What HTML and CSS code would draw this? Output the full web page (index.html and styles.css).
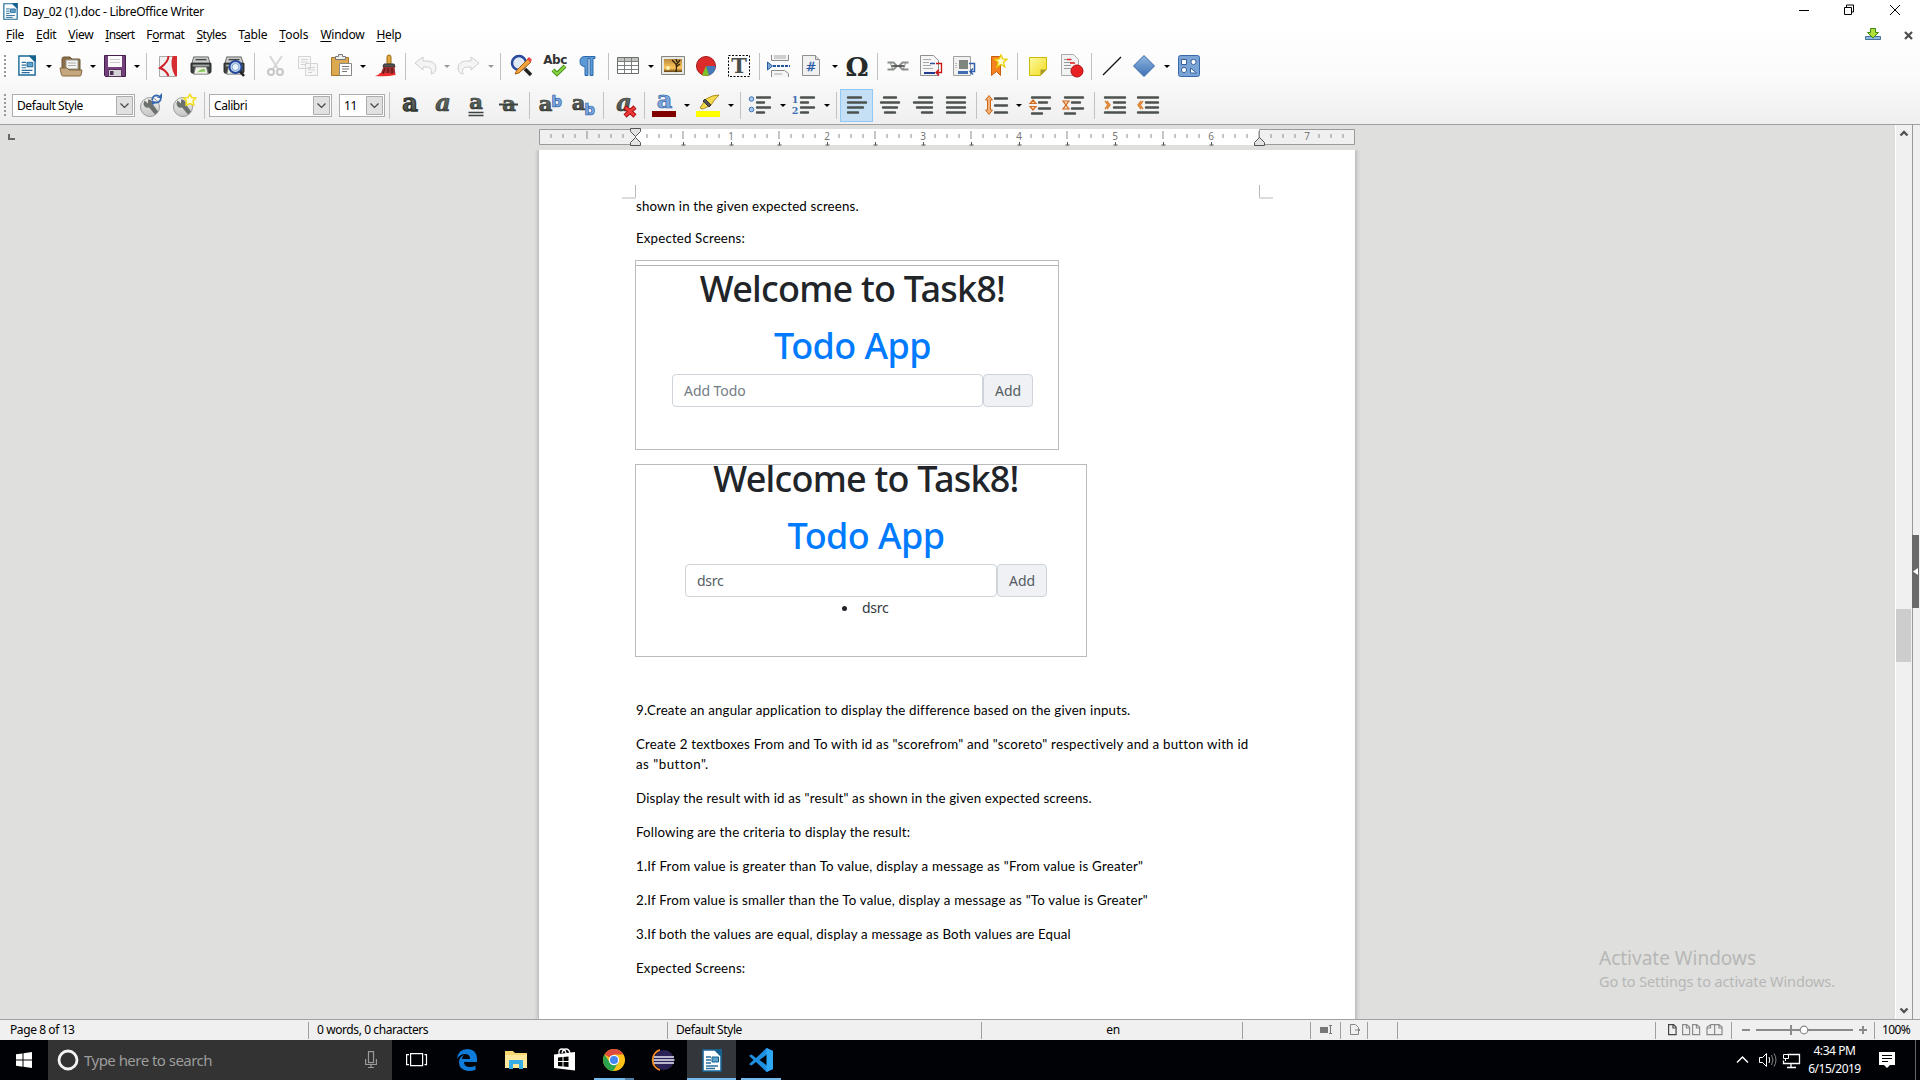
FILE: index.html
```html
<!DOCTYPE html>
<html lang="en">
<head>
<meta charset="utf-8">
<title>Day_02 (1).doc - LibreOffice Writer</title>
<link rel="stylesheet" href="styles.css">
</head>
<body>
<svg class="defs" width="0" height="0">
  <defs>
    <linearGradient id="ink" x1="0" y1="0" x2="0" y2="1"><stop offset="0" stop-color="#7b827b"/><stop offset="1" stop-color="#3c423f"/></linearGradient>
    <linearGradient id="blue" x1="0" y1="0" x2="0" y2="1"><stop offset="0" stop-color="#8fb6e0"/><stop offset="1" stop-color="#3d72b4"/></linearGradient>
    <linearGradient id="yel" x1="0" y1="0" x2="1" y2="1"><stop offset="0" stop-color="#fff9a0"/><stop offset="1" stop-color="#f0dc20"/></linearGradient>
    <linearGradient id="pic" x1="0" y1="0" x2="0" y2="1"><stop offset="0" stop-color="#b98a3c"/><stop offset=".7" stop-color="#ffc65a"/><stop offset="1" stop-color="#5d3c10"/></linearGradient>
    <linearGradient id="disc" x1="0" y1="0" x2="0" y2="1"><stop offset="0" stop-color="#f2f2f0"/><stop offset="1" stop-color="#c4c6c3"/></linearGradient>
    <symbol id="writer" viewBox="0 0 20 23"><path d="M1 1h12l6 6v15H1z" fill="#fff" stroke="#1b6a99" stroke-width="1.6"/><path d="M12 0h8v8z" fill="#17618f"/><path d="M4 8h5M4 11h5M4 14h5M4 17h12M4 19.500h9" stroke="#2a6f9c" stroke-width="1.300"/><path d="M10 8h6.500v5H10z" fill="#5ea3cd" stroke="#17618f"/></symbol>
    <symbol id="printer" viewBox="0 0 24 22"><path d="M4 1h16l2 7H2z" fill="#c9ccca" stroke="#5c605d"/><path d="M6 4h12" stroke="#444" stroke-width="1.500"/><path d="M1 8h22v9q0 2-2 2H3q-2 0-2-2z" fill="#3e4340" stroke="#222"/><path d="M3 9.500h18v2H3z" fill="#a2a8a4"/><path d="M6 12h12l2 8H4z" fill="#eef3e8" stroke="#777"/><path d="M8 18q3-4 8-4l1 3z" fill="#8ac75d"/></symbol>
    <symbol id="wrench" viewBox="0 0 33 33"><circle cx="16" cy="18" r="9.500" fill="url(#disc)" stroke="#9a9c99"/><path d="M10.500 11.500l3.500 3v-4q5 0 5 5l5 7-3 3-6-7q-5 1-5.500-4z" fill="#6d716d"/></symbol>
  </defs>
</svg>
<div class="screen">

  <header class="titlebar">
    <svg class="app-icon" width="15" height="17"><use href="#writer"/></svg>
    <span class="title">Day_02 (1).doc - LibreOffice Writer</span>
    <svg class="window-buttons" width="120" height="24" fill="none" stroke="#000"><path d="M4 10.500h10"/><path d="M49.500 7.500h7v7h-7zM51.500 7v-2h7v7h-2"/><path d="M95 5l10 10M105 5l-10 10"/></svg>
  </header>

  <div class="chrome">
    <nav class="menubar">
      <span><u>F</u>ile</span>
      <span><u>E</u>dit</span>
      <span><u>V</u>iew</span>
      <span><u>I</u>nsert</span>
      <span>F<u>o</u>rmat</span>
      <span><u>S</u>tyles</span>
      <span>T<u>a</u>ble</span>
      <span><u>T</u>ools</span>
      <span><u>W</u>indow</span>
      <span><u>H</u>elp</span>
      <svg class="menu-end" width="55" height="22"><path d="M.5 12.500h15v3H.5z" fill="#8fb9dd" stroke="#47709a"/><path d="M5.500 4.500h5v4h3L8 14 2.500 8.500h3z" fill="#b4de3a" stroke="#3c8a10"/><path d="M40 8l7 7M47 8l-7 7" stroke="#4d4d4d" stroke-width="2.200"/></svg>
    </nav>

    <div class="toolbar">
      <i class="grip"></i>
      <svg class="ico"><use href="#writer" x="8" y="5" width="18" height="21"/></svg><i class="dd"></i>
      <svg class="ico"><path d="M8 9q0-2 2-2h6l2 2h7q1 0 1 1v12H8z" fill="#8b6f47" stroke="#6d5534"/><path d="M12 10h12v9H12z" fill="#f4f4f2" stroke="#999"/><path d="M14 13h8M14 15.500h8" stroke="#aaa"/><path d="M6 18h7l2 2h13l-1 5q0 1-1 1H9q-1 0-1.500-1z" fill="#c5a880" stroke="#86693f"/></svg><i class="dd"></i>
      <svg class="ico"><path d="M6.500 5.500h21v21h-20l-1-1z" fill="#74407c" stroke="#42204a"/><path d="M10 6h14v11H10z" fill="#fbfbfb"/><path d="M12 9.500h10M12 12.500h10" stroke="#ccc"/><path d="M10.500 19.500h13v7h-13z" fill="#d4d4d4" stroke="#5a3361"/><path d="M12 21h3.500v4H12z" fill="#51305a"/></svg><i class="dd"></i>
      <i class="sep wide"></i>
      <svg class="ico"><path d="M8.500 6.500h17v20h-17z" fill="#f1f1f1" stroke="#aaa"/><path d="M21.500 6h4.500v20h-2q-5.500-10-2.500-20z" fill="#d62b30"/><path d="M17.500 6q0 6-8.500 12 6 2 8.500 8" fill="none" stroke="#cf2026" stroke-width="2"/></svg>
      <svg class="ico"><use href="#printer" x="6" y="6" width="22" height="20"/></svg>
      <svg class="ico"><use href="#printer" x="6" y="6" width="22" height="20"/><circle cx="18.500" cy="17" r="6" fill="#c7dcf2" stroke="#24479c" stroke-width="2"/><path d="M23 21.500l4 4.500" stroke="#222" stroke-width="2.600"/><circle cx="18.500" cy="17" r="3.500" fill="#eaf3fb" stroke="#7da6d4"/></svg>
      <i class="sep"></i>
      <svg class="ico"><path d="M12 6l8 13M24 6l-9 13" stroke="#d6d6d6" stroke-width="2"/><circle cx="13" cy="22" r="3" fill="none" stroke="#c6c6c6" stroke-width="2"/><circle cx="22" cy="22" r="3" fill="none" stroke="#c6c6c6" stroke-width="2"/></svg>
      <svg class="ico"><path d="M7.500 6.500h12v12h-12zM14.500 13.500h12v12h-12z" fill="#f7f7f7" stroke="#d4d4d4"/><path d="M10 9.500h7M10 12h7M10 14.500h4M17 17.500h7M17 20h7M17 22.500h4" stroke="#d4d4d4"/></svg>
      <svg class="ico"><path d="M7.500 7.500h17v18h-17z" fill="#dca850" stroke="#a2742c"/><path d="M11.500 9.500v-3h3v-2h4v2h3v3z" fill="#eee" stroke="#777"/><path d="M15.500 13.500h12v12h-12z" fill="#fff" stroke="#888"/><path d="M18 16.500h7M18 19h7M18 21.500h5" stroke="#777"/></svg><i class="dd"></i>
      <svg class="ico"><path d="M19 7q0-2 2-2t2 2v7h-4z" fill="#e6a93c" stroke="#9b6a1a"/><path d="M16 14h10l1 3H15z" fill="#555" stroke="#333"/><path d="M15.500 17h11l1 8H12z" fill="#9c2f30"/><path d="M12 23h15v2q-8 2-20 1 4-1 5-3z" fill="#ee2b2b"/><path d="M17 18l-2 6M20 18v5M24 18v6" stroke="#551010"/></svg>
      <i class="sep"></i>
      <svg class="ico"><path d="M6 13l8-6v4q13-1 13 7 0 5-5 6 3-8-8-7v3z" fill="#f4f4f4" stroke="#cfcfcf"/></svg><i class="dd off short"></i>
      <svg class="ico"><path d="M27 13l-8-6v4q-13-1-13 7 0 5 5 6-3-8 8-7v3z" fill="#f4f4f4" stroke="#cfcfcf"/></svg><i class="dd off"></i>
      <i class="sep wide"></i>
      <svg class="ico"><circle cx="14" cy="13" r="7" fill="#dfe9f4" stroke="#28489c" stroke-width="2.500"/><path d="M20 19l6 6" stroke="#222" stroke-width="3.500"/><path d="M10 24l2-4L23 9l3 3-12 11z" fill="#f2a33c" stroke="#a35f16"/><path d="M22 9l2-2 3 3-2 2z" fill="#e44"/></svg>
      <svg class="ico"><text x="17" y="14" class="abc">Abc</text><path d="M15 20l4 4 8-8" fill="none" stroke="#3f8e16" stroke-width="4"/><path d="M15 20l4 4 8-8" fill="none" stroke="#8bd33f" stroke-width="2"/></svg>
      <svg class="ico"><path d="M24 6.500v2h-2v17h-3v-17h-2v17h-3v-9q-5 0-5-5t5-5z" fill="#5b9ad6" stroke="#2c69a9"/></svg>
      <i class="sep"></i>
      <svg class="ico"><path d="M5.500 7.500h21v16h-21z" fill="#fff" stroke="#6b6f6b"/><path d="M6 8h20v3H6z" fill="#bfc2bf"/><path d="M6 11.500h20M6 15.500h20M6 19.500h20M12.500 8v15M19.500 8v15" stroke="#7c807c"/></svg><i class="dd"></i>
      <svg class="ico"><path d="M5.500 6.500h23v18h-23z" fill="#e8e8e4" stroke="#85877f"/><path d="M8 9h18v13H8z" fill="url(#pic)"/><path d="M20 22q1-5 0-8l-4-4M20 15l4-5M21 12l-1-3M20 17l4-3" fill="none" stroke="#322008" stroke-width="1.300"/><circle cx="12" cy="18" r="2" fill="#fff3b0"/></svg>
      <svg class="ico"><circle cx="17" cy="16" r="9.500" fill="#dd2a2a" stroke="#a31515"/><path d="M17 16h9.500q0 8-7 9.500z" fill="#4578b8"/><path d="M17 16l3 9.200q-3 1-7 0z" fill="#7cc02c"/></svg>
      <svg class="ico"><path d="M6.500 5.500h21v21h-21z" fill="none" stroke="#000" stroke-dasharray="2 1.500"/><text x="17" y="23" class="tee">T</text></svg>
      <i class="sep"></i>
      <svg class="ico"><path d="M8.500 5v5.500h17V5M8.500 27v-6.500h13l4 3V27" fill="#f5f5f5" stroke="#8b8b8b"/><path d="M11 6h12M11 8h12M11 24h8" stroke="#aaa"/><path d="M4.500 12l5 4-5 4z" fill="#7ba7d6" stroke="#2a5da0"/><path d="M10 16h17" stroke="#2456a4" stroke-width="2" stroke-dasharray="3 1"/></svg>
      <svg class="ico"><path d="M6.500 5.500h13l4 4v16h-17z" fill="#f1f1f1" stroke="#909090"/><path d="M19.500 5.500v4h4" fill="#ddd" stroke="#909090"/><text x="15" y="21" class="hash">#</text></svg><i class="dd"></i>
      <svg class="ico"><text x="17" y="25.500" class="omega">Ω</text></svg>
      <i class="sep"></i>
      <svg class="ico"><g fill="none" stroke="#8a8f8a" stroke-width="1.800"><path d="M6.500 12.500h6l3.500 3.500-3.500 3.500h-6M27.500 12.500h-6L18 16l3.500 3.500h6"/><path d="M10 16h14" stroke="#555"/><path d="M9 12l3 8M25 12l-3 8" stroke-width="1"/></g></svg>
      <svg class="ico"><path d="M6.500 5.500h13l5 5v15h-18z" fill="#f6f6f6" stroke="#909090"/><path d="M9 9.500h8M9 12.500h6M9 15.500h8M9 18.500h10" stroke="#aaa"/><path d="M16 13.500h5" stroke="#2a56a0" stroke-width="1.500"/><path d="M10 23h11" stroke="#1d3f8e" stroke-width="2"/><path d="M22 13.500h5.500v9H23m2-3l-3 3 3 3" fill="none" stroke="#c11" stroke-width="1.300"/></svg>
      <svg class="ico"><path d="M6.500 6.500h17v19h-17z" fill="#f1f1f1" stroke="#a0a0a0"/><path d="M12 10h9v9h-9z" fill="#7d857d"/><path d="M11 22.500h10" stroke="#3f6fb2" stroke-width="3"/><path d="M22 13.500h5.500v8H24m2-3l-3 3 3 3" fill="none" stroke="#2f5fa8" stroke-width="1.500"/><path d="M9 13v6" stroke="#888" stroke-dasharray="1 1"/></svg>
      <svg class="ico"><path d="M11.500 6.500h9v19l-4-4-5 4z" fill="#f58220" stroke="#c85f0a"/><path d="M21 5l1.700 4 4.300.3-3.400 3 1.200 4.500L21 14.500l-4 2.300 1.200-4.500-3.200-3 4.300-.3z" fill="#fffbd0" stroke="#e8cf00" stroke-width="1.300"/></svg>
      <i class="sep"></i>
      <svg class="ico"><path d="M8.500 7.500h17v12l-6 6h-11z" fill="url(#yel)" stroke="#cdb80c"/><path d="M19.500 25.500v-6h6z" fill="#a99a2a"/></svg>
      <svg class="ico"><path d="M7.500 4.500h12l5 5v16h-17z" fill="#f3f3f3" stroke="#aaa"/><path d="M10 9.500h8M10 12.500h9M10 15.500h7M10 18.500h7" stroke="#999"/><path d="M13 9.500h4M16 13h5" stroke="#e22" stroke-width="1.500"/><circle cx="23" cy="21" r="6" fill="#e82222" stroke="#b00c0c"/></svg>
      <i class="sep"></i>
      <svg class="ico"><path d="M8 25L26 7" stroke="#111" stroke-width="1.300"/></svg>
      <svg class="ico"><path d="M16 5.500L26.500 16 16 26.500 5.500 16z" fill="url(#blue)" stroke="#3566a6"/></svg><i class="dd"></i>
      <svg class="ico"><rect x="6.500" y="5.500" width="21" height="21" rx="2" fill="#7aa3d6" stroke="#3a69ab"/><g fill="#fff" stroke="#35609c"><path d="M9.500 9.500h5v5h-5zM18.500 18v5h6z"/><circle cx="21.500" cy="12" r="2.600"/><circle cx="12" cy="20" r="2.600"/></g></svg>
    </div>

    <div class="toolbar second">
      <i class="grip"></i>
      <div class="combo wide"><span>Default Style</span><svg class="drop" width="17" height="19"><path d="M.5.500h16v18H.5z" fill="#e1e1e1" stroke="#adadad"/><path d="M4.500 7.500l4 4 4-4" fill="none" stroke="#444" stroke-width="1.200"/></svg></div>
      <svg class="ico styl"><use href="#wrench"/><path d="M18 11q1-6 7-4M27 9q-1 6-7 4" fill="none" stroke="#3768b2" stroke-width="1.800"/><path d="M28 4v5h-5zM18 16v-5l4 3z" fill="#3768b2"/></svg>
      <svg class="ico"><use href="#wrench"/><path d="M23 5.500l1.800 3 4 .6-2.800 3 .8 4L23 14.500 19 16l.6-4-2.800-3 4.200-.5z" fill="#fffde0" stroke="#f2dc1e" stroke-width="1.500"/></svg>
      <i class="sep stylesep"></i>
      <div class="combo wide"><span>Calibri</span><svg class="drop" width="17" height="19"><path d="M.5.500h16v18H.5z" fill="#e1e1e1" stroke="#adadad"/><path d="M4.500 7.500l4 4 4-4" fill="none" stroke="#444" stroke-width="1.200"/></svg></div>
      <div class="combo size"><span>11</span><svg class="drop" width="17" height="19"><path d="M.5.500h16v18H.5z" fill="#e1e1e1" stroke="#adadad"/><path d="M4.500 7.500l4 4 4-4" fill="none" stroke="#444" stroke-width="1.200"/></svg></div>
      <i class="sep"></i>
      <svg class="ico"><text x="17" y="22" class="ltr heavy">a</text></svg>
      <svg class="ico"><text x="17" y="22" class="ltr ital">a</text></svg>
      <svg class="ico"><text x="17" y="20" class="ltr">a</text><path d="M9.500 23.500h15M9.500 26.500h15" stroke="#3c423f" stroke-width="1.500"/></svg>
      <svg class="ico"><text x="17" y="22" class="ltr">a</text><path d="M7 15.500h19" stroke="#3c423f" stroke-width="2"/></svg>
      <i class="sep"></i>
      <svg class="ico"><text x="12.500" y="22" class="ltr">a</text><text x="23.500" y="18" class="ltr b">b</text></svg>
      <svg class="ico"><text x="12.500" y="21" class="ltr">a</text><text x="23.500" y="26" class="ltr b">b</text></svg>
      <i class="sep"></i>
      <svg class="ico"><text x="17" y="22" class="ltr ital">a</text><path d="M18 18l10 9M28 18l-10 9" stroke="#a90f0f" stroke-width="4.500"/><path d="M18.500 18.500l9 8M27.500 18.500l-9 8" stroke="#ee3a3a" stroke-width="2.500"/></svg>
      <i class="sep"></i>
      <svg class="ico"><text x="16.500" y="19" class="ltr b big">a</text><path d="M4 22h24v6H4z" fill="#800000"/></svg><i class="dd"></i>
      <svg class="ico"><path d="M8 19l6-9q6-4 13-4-5 5-8 10l-8 4z" fill="#f2d94e" stroke="#b08e1c"/><path d="M13 10l6 6-2 2-6-6z" fill="#555" stroke="#333"/><path d="M4 22h24v6H4z" fill="#ffff00"/></svg><i class="dd"></i>
      <i class="sep"></i>
      <svg class="ico"><circle cx="7.500" cy="10" r="2.300" fill="#a9c6e8" stroke="#4478b8"/><circle cx="7.500" cy="20.500" r="2.300" fill="#a9c6e8" stroke="#4478b8"/><path d="M13 8.500h13M13 13.500h7M13 18.500h13M13 23.500h7" class="bar"/></svg><i class="dd"></i>
      <svg class="ico"><text x="7" y="14" class="num">1</text><text x="7" y="25" class="num">2</text><path d="M13 8.500h13M13 13.500h7M13 18.500h13M13 23.500h7" class="bar"/></svg><i class="dd"></i>
      <i class="sep"></i>
      <svg class="ico active"><path d="M8 8.500h13M8 13.500h18M8 18.500h15M8 23.500h10" class="bar"/></svg>
      <svg class="ico"><path d="M11 8.500h12M8 13.500h18M10 18.500h14M12 23.500h10" class="bar"/></svg>
      <svg class="ico"><path d="M13 8.500h13M8 13.500h18M11 18.500h15M16 23.500h10" class="bar"/></svg>
      <svg class="ico"><path d="M8 8.500h18M8 13.500h18M8 18.500h18M8 23.500h18" class="bar"/></svg>
      <i class="sep"></i>
      <svg class="ico"><path d="M9 6.500l3.500 4.500H10.500v10H12.500L9 25.500 5.500 21H7.500V11H5.500z" fill="#f3b17c" stroke="#cf6a16"/><path d="M15 9.500h12M15 16.500h12M15 23.500h12" class="bar"/></svg><i class="dd"></i>
      <svg class="ico"><path d="M9 11l3 3.500H6zM9 21l3-3.500H6z" fill="#fbd9b8" stroke="#d2691e" stroke-width="1.200"/><path d="M8 8.500h18M15 13.500h8M15 19.500h11M8 24.500h10" class="bar"/></svg>
      <svg class="ico"><path d="M9 16l3-4H6zM9 16l3 4H6z" fill="#fbd9b8" stroke="#d2691e" stroke-width="1.200"/><path d="M8 8.500h18M15 13.500h8M15 19.500h11M8 24.500h10" class="bar"/></svg>
      <i class="sep"></i>
      <svg class="ico"><path d="M7 12l3 4-3 4M9 12l3 4-3 4" fill="none" stroke="#de8738" stroke-width="1.500"/><path d="M7 8.500h20M16 13.500h11M16 18.500h11M7 23.500h20" class="bar"/></svg>
      <svg class="ico"><path d="M12 12l-3 4 3 4M10 12l-3 4 3 4" fill="none" stroke="#de8738" stroke-width="1.500"/><path d="M7 8.500h20M15 13.500h12M15 18.500h12M7 23.500h20" class="bar"/></svg>
    </div>
  </div>

  <main class="work">
    <section class="canvas">
      <div class="ruler-row">
        <svg class="tab-type" width="539" height="20"><path d="M9 6v5h6" fill="none" stroke="#686868" stroke-width="2"/></svg>
        <svg class="ruler" width="820" height="21">
          <defs>
            <pattern id="ticks" x="-.5" width="96" height="17" patternUnits="userSpaceOnUse" patternTransform="translate(96 0)"><path d="M12.500 6v4M24.500 6v4M36.500 6v4M60.500 6v4M72.500 6v4M84.500 6v4M48.500 3v8" stroke="#8a8a8a"/></pattern>
            <pattern id="stops" width="48" height="21" patternUnits="userSpaceOnUse" patternTransform="translate(120 0)"><path d="M24.500 14v3M22.500 17h4" stroke="#555"/></pattern>
          </defs>
          <path d="M96 1h625v16H96z" fill="#fff"/>
          <path d="M.5 1.500h96v15H.5zM720.500 1.500h95v15h-95z" fill="#f0f0f0" stroke="#9b9b9b"/>
          <path d="M1 0h814v17H1z" fill="url(#ticks)"/>
          <path d="M120 0h590v21H120z" fill="url(#stops)"/>
          <g class="ruler-num"><text x="192" y="12">1</text><text x="288" y="12">2</text><text x="384" y="12">3</text><text x="480" y="12">4</text><text x="576" y="12">5</text><text x="672" y="12">6</text><text x="768" y="12">7</text></g>
          <path d="M91.500.5h10v3l-5 5-5-5zM91.500 17.500h10v-3l-5-5-5 5zM715.500 17.500h10v-3l-5-5-5 5z" fill="#e3e3e3" stroke="#555"/>
        </svg>
      </div>
      <article class="page">
        <svg class="corner left" width="14" height="14"><path d="M13.500 0v14" stroke="#b9b9b9"/><path d="M0 13h14" stroke="#dcdcdc" stroke-width="2"/></svg>
        <svg class="corner right" width="14" height="14"><path d="M.5 0v14" stroke="#b9b9b9"/><path d="M0 13h14" stroke="#dcdcdc" stroke-width="2"/></svg>
        <p class="first">shown in the given expected screens.</p>
        <p class="first">Expected Screens:</p>
        <figure class="shot one">
          <h1>Welcome to Task8!</h1>
          <h2>Todo App</h2>
          <div class="todo"><div class="field hint">Add Todo</div><div class="btn">Add</div></div>
        </figure>
        <figure class="shot two">
          <h1>Welcome to Task8!</h1>
          <h2>Todo App</h2>
          <div class="todo"><div class="field">dsrc</div><div class="btn">Add</div></div>
          <div class="item"><i class="bullet"></i>dsrc</div>
        </figure>
        <p>9.Create an angular application to display the difference based on the given inputs.</p>
        <p class="loose">Create 2 textboxes From and To with id as "scorefrom" and "scoreto" respectively and a button with id<br><span class="looser">as "button".</span></p>
        <p>Display the result with id as "result" as shown in the given expected screens.</p>
        <p>Following are the criteria to display the result:</p>
        <p class="loose first-case">1.If From value is greater than To value, display a message as "From value is Greater"</p>
        <p class="loose">2.If From value is smaller than the To value, display a message as "To value is Greater"</p>
        <p>3.If both the values are equal, display a message as Both values are Equal</p>
        <p>Expected Screens:</p>
      </article>
      <aside class="activate"><div class="big">Activate Windows</div><div>Go to Settings to activate Windows.</div></aside>
    </section>
    <div class="scrollbar">
      <svg width="16" height="20"><path d="M4.500 10.500l3.500-3.500 3.500 3.500" fill="none" stroke="#555" stroke-width="2.400"/></svg>
      <div class="thumb"></div>
      <svg width="16" height="20"><path d="M4.500 9.500l3.500 3.500 3.500-3.500" fill="none" stroke="#555" stroke-width="2.400"/></svg>
    </div>
    <div class="sidebar"><svg class="handle" width="7" height="73"><path d="M6 33v7L1 36.500z" fill="#fff"/></svg></div>
  </main>

  <footer class="status">
    <div class="cell c1">Page 8 of 13</div>
    <div class="cell c2">0 words, 0 characters</div>
    <div class="cell c3">Default Style</div>
    <div class="cell c4">en</div>
    <div class="cell c5"></div>
    <div class="cell c6"><svg width="14" height="12"><path d="M1 3h8v6H1z" fill="#777"/><path d="M11.500 1v9M10 1.500h3M10 9.500h3" stroke="#777"/></svg></div>
    <div class="cell c7"><svg width="12" height="12" fill="none" stroke="#888"><path d="M1.500.500h5l3 3v7h-8z"/><path d="M6 6h5M9 4l2 2-2 2"/></svg></div>
    <div class="cell c8"></div>
    <div class="cell c9"></div>
    <div class="cell c10"><svg width="56" height="12" fill="none" stroke="#8a8a8a" stroke-width="1.200"><path d="M.6.600h5l2.500 2.500v7.500H.6zM5 1v3h3" stroke="#444"/><path d="M14.600.600h4l3 2.500v7.500h-7zM18.500 1v3h3M24.600.600h4l3 2.500v7.500h-7zM28.500 1v3h3M47 .600h-4l-4 2.500v7.500h15V3.100L51 .600h-4zM46.600.600v10M42.500 1v3h-3M51 1v3h3"/></svg></div>
    <div class="cell c11"><svg width="128" height="14" stroke="#8a8a8a" stroke-width="2"><path d="M2 7h8M16 7h97M51 2v10M119 7h8M123 3v8"/><circle cx="64" cy="7" r="3.800" fill="#fff" stroke-width="1.200"/></svg></div>
    <div class="cell c12">100%</div>
  </footer>

  <div class="taskbar">
    <div class="start"><svg width="16" height="16" fill="#fff"><path d="M0 2.300L6.500 1.400V7.600H0zM7.500 1.200L16 0v7.600H7.500zM0 8.500h6.500v6.200L0 13.800zM7.500 8.500H16V16l-8.500-1.200z"/></svg></div>
    <div class="search"><svg width="22" height="22"><circle cx="11" cy="11" r="9" fill="none" stroke="#f4f4f4" stroke-width="2.800"/></svg><span>Type here to search</span><svg class="mic" width="12" height="18" fill="none" stroke="#9a9a9a" stroke-width="1.200"><rect x="3.500" y=".6" width="5" height="11"/><path d="M.6 8v5.500h10.800V8M6 13.500V17M3 16.500h6"/></svg></div>
    <div class="app view"><svg width="24" height="16" fill="none" stroke="#fff" stroke-width="1.200"><path d="M5.600 1.600h12v12h-12zM4 2.600H1.600v10H4M19.500 2.600h2v10h-2"/></svg></div>
    <div class="app"><svg width="22" height="24" viewBox="0 0 22 24"><path d="M1 11Q2 1 11.500 1 21 1.500 21 11v3H8q0 5 6 5 3 0 5.500-1.500v4.500Q16 23 12 23 3 22 3 14q0-5 5-7-2 2-2 4h8q0-5-5-5-5 0-8 5z" fill="#0e7bd9"/></svg></div>
    <div class="app"><svg width="22" height="20"><path d="M0 1h8l2 2h12v15H0z" fill="#f7d774"/><path d="M0 5h22v13H0z" fill="#ffe79b"/><path d="M4 19v-8q0-1 1-1h12q1 0 1 1v8h-4v-5H8v5z" fill="#35aee6"/></svg></div>
    <div class="app"><svg width="22" height="24"><path d="M0 6.500L21 4v18.500L0 20z" fill="#fff"/><path d="M5 6V4q0-3 3-3t4 4M8 5q1-4 4-4t4 4" fill="none" stroke="#fff" stroke-width="1.300"/><path d="M4 9.500l4.500-.5v4H4zM9.500 9l5-.5V13h-5zM4 14h4.500v4.500L4 18zM9.500 14h5v5l-5-.5z" fill="#000"/></svg></div>
    <div class="app run multi"><svg width="22" height="22"><circle cx="11" cy="11" r="11" fill="#fbc116"/><path d="M11 11L1.500 5.500A11 11 0 0 1 20.500 5.500H11z" fill="#dd4b3e"/><path d="M1.500 5.500A11 11 0 0 0 10 22l5.500-8.500L11 11 6 12z" fill="#2ba24c"/><circle cx="11" cy="11" r="5.200" fill="#fff"/><circle cx="11" cy="11" r="4" fill="#4487f4"/></svg></div>
    <div class="app"><svg width="24" height="22"><path d="M9 1A10.500 10.500 0 0 0 9 21" fill="none" stroke="#f08a24" stroke-width="2"/><circle cx="13" cy="11" r="10" fill="#2c2255"/><path d="M3 8h20M2.500 11h21M3 14h20" stroke="#e8e8f4" stroke-width="1.700"/></svg></div>
    <div class="app run current"><svg width="20" height="23"><use href="#writer"/></svg></div>
    <div class="app run"><svg width="24" height="24"><path d="M17.500 0L24 3v18l-6.500 3L7 14l-4.500 3.500L0 16.300 4.500 12 0 7.700l2.500-1.200L7 10zM18 6.500L10.500 12l7.500 5.500z" fill="#1f8fe0"/><path d="M17.500 0L24 3v18l-6.500 3z" fill="#2ea8f4"/></svg></div>
    <div class="tray">
      <svg width="190" height="40" fill="none" stroke="#fff"><path d="M7 22.500l5.500-5.500 5.500 5.500" stroke-width="1.500"/><path d="M29.500 17.500h3l4-4v13l-4-4h-3z"/><path d="M39 17q1.500 3 0 6"/><path d="M41.500 15q3 5 0 10M44 13.500q4 6.500 0 13" stroke="#888"/><path d="M57.500 14.500h12v9h-16v-3M61 24v3M57 27.500h9" stroke-width="1.300"/><path d="M53.500 14.500h5v4h-5zM55.500 18v3"/></svg>
      <div class="clock"><div>4:34 PM</div><div class="date">6/15/2019</div></div>
      <svg class="action" width="16" height="17"><path d="M0 0h16v13h-5l-3 3-3-3H0z" fill="#fff"/><path d="M3 3.500h10M3 6.500h10M3 9.500h6" stroke="#000" stroke-width="1.200"/></svg>
      <i class="peek"></i>
    </div>
  </div>
</div>
</body>
</html>
```
FILE: styles.css
```css
* { box-sizing: border-box; }
body { margin: 0; background: #dfdfde; }
svg { display: block; flex: none; overflow: visible; }
.defs { position: absolute; }
i { font-style: normal; flex: none; }

.screen {
  width: 1920px; height: 1080px; overflow: hidden;
  display: flex; flex-direction: column;
  font: 12px/16px "Noto Sans", sans-serif; color: #000;
  letter-spacing: -.41px; white-space: nowrap;
}

.titlebar { height: 24px; background: #fff; display: flex; align-items: flex-start; flex: none; padding-left: 3px; }
.app-icon { margin-top: 3px; }
.title { margin: 4px 0 0 5px; flex: 1; letter-spacing: -.3px; }
.window-buttons { margin-right: 5px; }

.chrome { height: 101px; flex: none; border-bottom: 1px solid #a0a0a0; background: linear-gradient(#fff, #fbfbfb 50%, #efefef); }
.menubar { height: 22px; display: flex; align-items: center; }
.menubar > span { padding: 0 6px; letter-spacing: -.3px; }
.menubar > span:nth-child(4) { letter-spacing: -.72px; }
.menubar > span:nth-child(5), .menubar > span:nth-child(6) { letter-spacing: -.45px; }
.menubar > span:nth-child(7) { letter-spacing: -.14px; }
.menubar > span:nth-child(8) { letter-spacing: -.04px; }
.menubar > span:nth-child(9) { letter-spacing: -.25px; }
.menubar u { text-underline-offset: 2px; }
.menu-end { margin-left: auto; }

.toolbar { height: 40px; display: flex; align-items: flex-start; padding: 4px 0 0 4px; }
.toolbar.second { height: 38px; padding-top: 3px; }
.grip { width: 2px; height: 22px; margin: 5px 4px 0 0; background: repeating-linear-gradient(#999 0 2px, transparent 2px 4px); }
.ico { width: 33px; height: 33px; }
.dd { width: 11px; height: 33px; display: flex; align-items: center; justify-content: center; }
.dd::after { content: ""; border: solid transparent; border-width: 3px 3px 0; border-top-color: #000; }
.dd.off::after { border-top-color: #999; }
.dd.short { width: 10px; }
.sep { width: 8px; height: 27px; margin-top: 3px; background: linear-gradient(#c2c2c2, #c2c2c2) 4px 0 / 1px 100% no-repeat; }
.sep.wide { width: 9px; }
.active { background: #c5e0f5; outline: 1px solid #90c8f6; outline-offset: -1px; }
.bar { stroke: #4c514d; stroke-width: 2.4; fill: none; stroke-linecap: round; }

.combo { height: 23px; margin-top: 5px; border: 1px solid #abadb3; background: #fff; display: flex; align-items: center; padding: 0 1px 0 4px; flex: none; }
.combo .drop { margin-left: auto; }
.combo.wide { width: 123px; margin-left: 2px; }
.combo.wide + .styl { margin-left: -1px; }
.combo.size { width: 46px; margin-left: 7px; }
.stylesep { margin-right: -1px; }

.ltr { font: bold 21px "DejaVu Serif", serif; fill: url(#ink); stroke: #303632; stroke-width: .7; text-anchor: middle; letter-spacing: 0; }
.ltr.heavy { font-size: 24px; stroke-width: 1.3; }
.ltr.ital { font-style: italic; font-size: 24px; }
.ltr.b { font-family: "DejaVu Sans", sans-serif; font-size: 15px; fill: #7fa9dc; stroke: #2f62a8; }
.ltr.b.big { font: bold 24px "DejaVu Serif", serif; }
.abc { font: bold 12px "DejaVu Sans", sans-serif; letter-spacing: -.5px; fill: #333; text-anchor: middle; }
.tee { font: bold 21px "DejaVu Serif", serif; fill: #4b504c; text-anchor: middle; letter-spacing: 0; }
.hash { font: 13px "DejaVu Sans", sans-serif; fill: #2456a4; stroke: #2456a4; stroke-width: .3; text-anchor: middle; letter-spacing: 0; }
.omega { font: bold 26px "DejaVu Serif", serif; fill: #262b29; text-anchor: middle; letter-spacing: 0; }
.num { font: bold 9.5px "DejaVu Serif", serif; fill: #3a6fb2; text-anchor: middle; letter-spacing: 0; }

.work { height: 895px; flex: none; display: flex; border-bottom: 1px solid #a0a0a0; }
.canvas { width: 1895px; background: #dfdfde; position: relative; overflow: hidden; }
.ruler-row { display: flex; height: 25px; padding-top: 3px; }
.ruler-num text { font: 10px "Noto Sans", sans-serif; fill: #777; text-anchor: middle; letter-spacing: 0; }
.page { margin-left: 539px; width: 816px; height: 870px; background: #fff; padding: 46px 0 0 96px; position: relative; box-shadow: 0 0 4px 1px #aaa; clip-path: inset(0 -8px); font: 13.3px/20px Lato, sans-serif; }
.page p { margin: 0 0 14px 1px; letter-spacing: .175px; }
.page p.first { margin-bottom: 12px; letter-spacing: .155px; }
.page p.loose { letter-spacing: .22px; }
.page p.first-case { letter-spacing: .242px; }
.looser { letter-spacing: .51px; }
.corner { position: absolute; top: 35px; }
.corner.left { left: 83px; }
.corner.right { left: 720px; }

.shot { margin: 0; border: 1px solid #bbb; overflow: hidden; font: 14px/20px "Noto Sans", sans-serif; color: #555c62; letter-spacing: -.06px; }
.shot.one { width: 424px; height: 190px; margin-bottom: 14px; padding: 4px 25px 0 36px; }
.shot.one::before { content: ""; display: block; height: 1px; margin: 0 -25px 0 -36px; background: #b5b5b5; }
.shot.two { width: 452px; height: 193px; margin-bottom: 43px; padding: 0 39px 0 49px; }
.shot h1, .shot h2 { margin: 0; font-weight: 500; font-size: 36px; line-height: 48px; text-align: center; color: #212529; height: 57px; letter-spacing: -.77px; }
.shot h2 { color: #007bff; height: 52px; letter-spacing: -.58px; }
.shot.one h1 { margin-top: -1px; }
.shot.two h1 { margin-top: -10px; }
.todo { display: flex; height: 33px; }
.field { width: 311px; border: 1px solid #ced4da; border-radius: 4px; padding: 6px 11px; }
.two .field { width: 312px; letter-spacing: -.26px; }
.field.hint { color: #747c84; }
.btn { width: 50px; border: 1px solid #ced4da; border-radius: 4px; background: #eff1f5; text-align: center; padding-top: 6px; }
.item { display: flex; align-items: center; margin: 0 0 0 157px; height: 22px; color: #33383d; letter-spacing: -.26px; }
.bullet { width: 5px; height: 5px; border-radius: 50%; background: #212529; margin-right: 15px; }

.activate { position: absolute; left: 1599px; top: 821px; color: #b7b7b6; font-size: 14.5px; line-height: 20px; letter-spacing: -.12px; }
.activate .big { font-size: 19px; line-height: 25px; letter-spacing: 0; }

.scrollbar { width: 17px; background: #f0f0f0; border-left: 1px solid #fff; display: flex; flex-direction: column; }
.thumb { width: 15px; height: 53px; background: #cdcdcd; margin: 464px 0 auto; }
.sidebar { width: 8px; border-left: 1px solid #999; background: #f0f0f0; }
.handle { background: #696969; margin: 410px 0 0 -1px; }

.status { height: 20px; flex: none; background: #f0f0f0; display: flex; align-items: center; }
.cell { height: 17px; border-right: 1px solid #a0a0a0; display: flex; align-items: center; flex: none; }
.c1 { width: 309px; padding-left: 10px; }
.c2 { width: 359px; padding-left: 8px; }
.c3 { width: 314px; padding-left: 8px; }
.c4 { width: 261px; justify-content: center; padding-left: 2px; }
.c5 { width: 68px; }
.c6 { width: 30px; justify-content: center; }
.c7 { width: 27px; justify-content: center; padding-left: 2px; }
.c8 { width: 30px; }
.c9 { width: 258px; }
.c10 { width: 76px; padding-left: 12px; }
.c11 { width: 143px; padding-left: 8px; }
.c12 { padding-left: 7px; border: 0; letter-spacing: -.64px; }

.taskbar { height: 40px; flex: none; background: #000206; display: flex; }
.start { width: 48px; display: flex; align-items: center; justify-content: center; }
.search { width: 344px; background: #333; color: #9c9c9c; font-size: 15px; letter-spacing: -.53px; display: flex; align-items: center; padding: 0 15px 0 9px; }
.search span { margin-left: 5px; }
.mic { margin-left: auto; }
.app { width: 49px; display: flex; align-items: center; justify-content: center; background: linear-gradient(#76b9ed, #76b9ed) center bottom / 0 2px no-repeat; }
.app.view { width: 50px; padding-right: 1px; }
.app.run { background-size: 40px 2px; }
.app.multi { background: linear-gradient(90deg, #76b9ed 31px, #4f7fa6 31px) center bottom / 40px 2px no-repeat; }
.app.current { background-color: #33373b; background-size: 100% 2px; }
.tray { margin-left: auto; width: 190px; display: flex; color: #fff; }
.tray > svg:first-child { margin-right: -117px; }
.clock { width: 65px; padding: 2px 0 0; margin-left: -1px; text-align: center; line-height: 18px; }
.date { letter-spacing: -.5px; }
.action { margin: 12px 0 0 12px; }
.peek { width: 1px; background: #666; margin-left: 20px; }
```
